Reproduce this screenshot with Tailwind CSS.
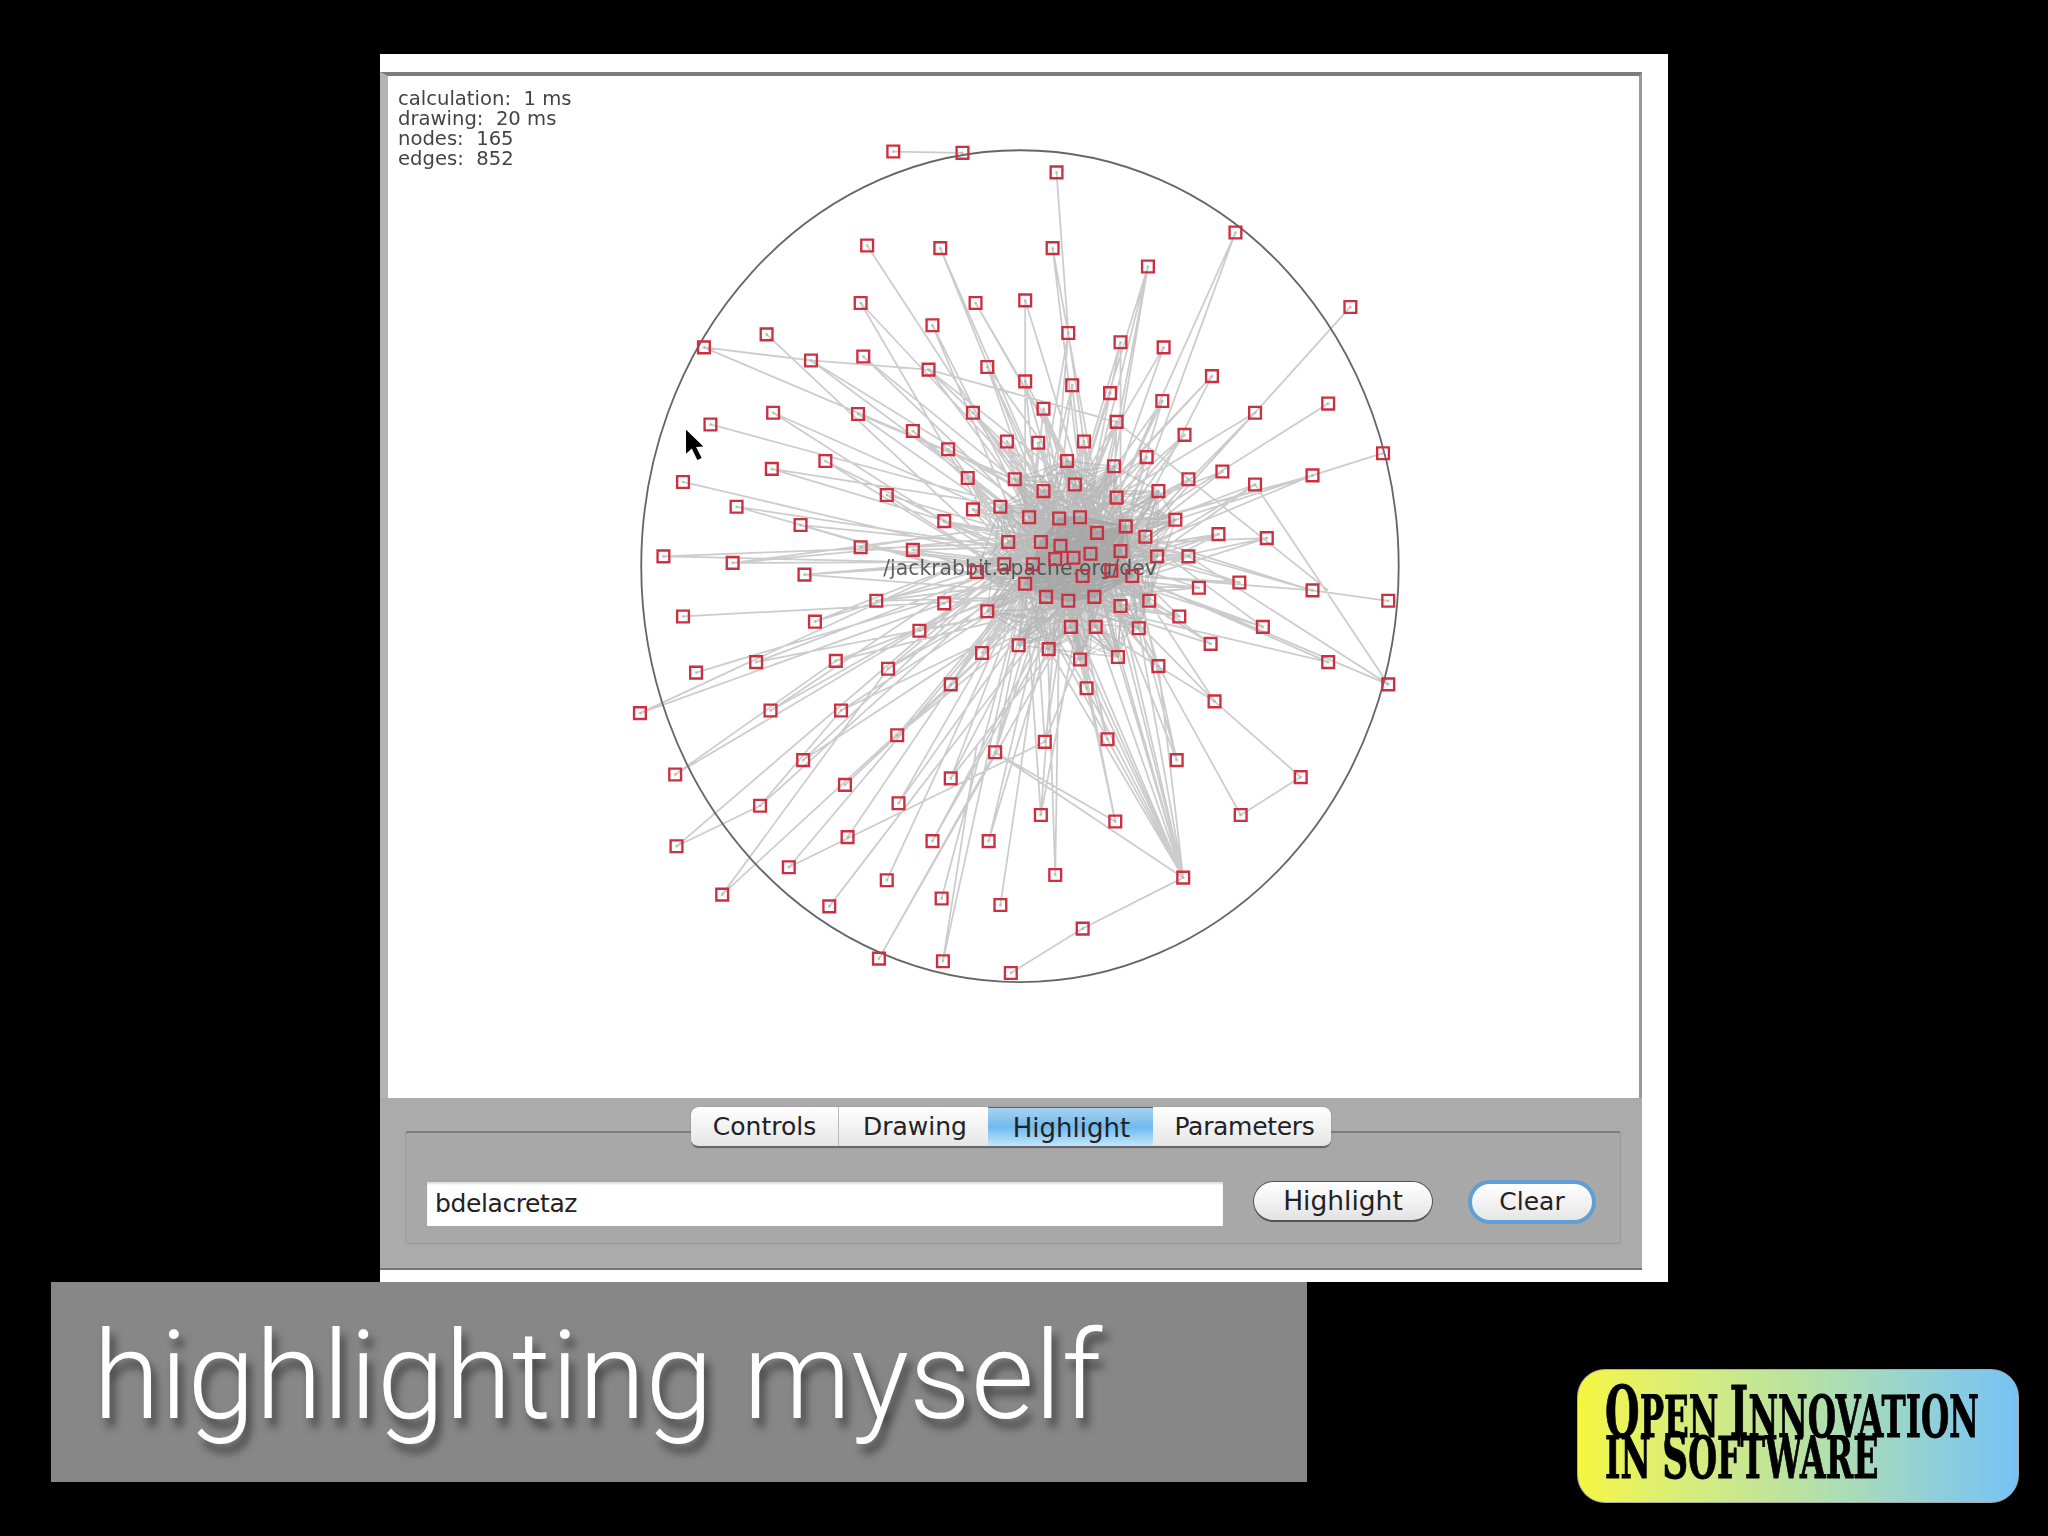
<!doctype html>
<html>
<head>
<meta charset="utf-8">
<script src="https://cdn.jsdelivr.net/npm/@tailwindcss/browser@4"></script>
</head>
<body class="m-0 bg-black">
<div class="w-[2048px] h-[1536px] bg-black overflow-hidden pt-[54px] flex flex-col">
  <!-- white slide frame holding the application window -->
  <div class="ml-[380px] w-[1288px] h-[1228px] bg-white pt-[18px] shrink-0">
    <div class="w-[1262px] h-[1198px] flex flex-col">
      <!-- canvas -->
      <div class="relative h-[1026px] border-t-[4px] border-t-[#7c7c7c] border-l-[8px] border-l-[#b4b4b4] border-r-[3px] border-r-[#989898] bg-white">
        <div class="absolute left-[10px] top-[13px] font-['DejaVu_Sans',sans-serif] text-[19.6px] leading-[20px] text-[#444] blur-[0.4px]">
          <div class="whitespace-pre">calculation:  1 ms</div>
          <div class="whitespace-pre">drawing:  20 ms</div>
          <div class="whitespace-pre">nodes:  165</div>
          <div class="whitespace-pre">edges:  852</div>
        </div>
        <svg id="g" class="block w-[1251px] h-[1022px] blur-[0.6px]" viewBox="297.1 58.2 957.9 782.5" fill="none">
          <g id="edges"></g>
          <ellipse cx="781" cy="433.5" rx="290" ry="318.5" stroke="#666" stroke-width="1.4"></ellipse>
          <path d="M525.3 329 V347.5 L529.7 343.4 L534 352.3 L537.3 350.6 L533 342.2 L538.6 341.8 Z" fill="#000"></path>
          <text x="781" y="440" text-anchor="middle" font-family="DejaVu Sans" font-size="15.6" fill="#444" fill-opacity=".85">/jackrabbit.apache.org/dev</text>
          <g id="nodes"></g>
        </svg>
      </div>
      <!-- bottom control panel -->
      <div class="h-[172px] bg-[#ababab] border-b-[2px] border-b-[#777] pt-[9px] px-[25px] flex flex-col font-['DejaVu_Sans',sans-serif] text-[#222]">
        <div class="relative z-10 mx-auto flex h-[41px] w-[640px] rounded-[8px] bg-gradient-to-b from-white to-[#e6e6e6] border-b-[2px] border-b-[#666] shadow-[0_0_1px_#555] text-[25px] leading-[40px] text-center overflow-hidden">
          <div class="w-[148px] border-r border-r-[#bbb]">Controls</div>
          <div class="w-[149px] pl-[3px]">Drawing</div>
          <div class="w-[165px] pl-[2px] text-[26px] bg-gradient-to-b from-[#a8d2f0] via-[#6fbaee] to-[#c2e6fb] border-t-[1px] border-t-[#5a5aa0]">Highlight</div>
          <div class="flex-1 pl-[5px] tracking-[-0.3px]">Parameters</div>
        </div>
        <div class="-mt-[17px] h-[113px] w-[1216px] rounded-[3px] border border-[#999] border-t-[2px] border-t-[#7d7d7d] bg-[#a8a8a8] pl-[21px] pt-[49px] flex items-start">
          <div class="shrink-0 w-[796px] h-[44px] bg-white shadow-[inset_0_2px_2px_#ddd] text-[25px] leading-[44px] pl-[8px] tracking-[-0.4px] text-[#222]">bdelacretaz</div>
          <div class="shrink-0 ml-[30px] w-[180px] h-[41px] -mt-[1px] rounded-full bg-gradient-to-b from-white via-[#f2f2f2] to-[#e2e2e2] border border-[#555] border-b-[2px] text-center text-[26.5px] leading-[38px]">Highlight</div>
          <div class="shrink-0 ml-[35px] w-[128px] h-[44px] -mt-[2px] rounded-full bg-gradient-to-b from-white to-[#e6e6e6] border-[4px] border-[#5f9fd6] text-center text-[25px] leading-[36px]">Clear</div>
        </div>
      </div>
    </div>
  </div>
  <!-- bottom strip: caption and logo -->
  <div class="flex items-start">
    <div class="ml-[51px] w-[1256px] h-[200px] bg-[#878787] pl-[42px] pt-[20px] text-white font-['Roboto',sans-serif] font-light text-[122px] leading-[150px] whitespace-nowrap [text-shadow:5px_9px_9px_rgba(0,0,0,0.5)]">highlighting myself</div>
    <div class="ml-[270px] mt-[87px] w-[442px] h-[134px] rounded-[28px] border border-[#aaa] bg-gradient-to-r from-[#f5f63c] via-[#b9e2a0] to-[#76c2f6] pl-[27px] pt-[20px] text-black font-['DejaVu_Serif',serif] font-bold leading-[44px] whitespace-nowrap [-webkit-text-stroke:1px_black]">
      <div class="h-[44px] origin-left scale-x-[0.56] w-[700px] text-[58px]"><span class="text-[71px]">O</span>PEN <span class="text-[71px]">I</span>NNOVATION</div>
      <div class="h-[44px] origin-left scale-x-[0.57] w-[700px] text-[58px]">IN <span class="text-[63px]">S</span>OFTWARE</div>
    </div>
  </div>
</div>
<script>
var N=[[684,116],[737,117],[809,132],[664,188],[720,190],[806,190],[946,178],[879,204],[1034,235],[659,232],[747,232],[785,230],[714,249],[818,255],[587,256],[539,266],[661,273],[621,276],[858,262],[891,266],[711,283],[756,281],[785,292],[821,295],[850,301],[928,288],[890,307],[961,316],[1017,309],[592,316],[544,325],[657,317],[745,316],[799,313],[855,323],[699,330],[907,333],[771,338],[795,339],[830,338],[726,344],[1059,347],[632,353],[591,359],[817,353],[853,357],[878,350],[741,366],[777,367],[823,371],[523,369],[910,367],[936,361],[1005,364],[961,371],[679,379],[799,376],[855,381],[887,376],[564,388],[745,390],[766,388],[788,396],[811,397],[827,396],[723,399],[900,398],[613,402],[862,403],[840,408],[933,409],[970,412],[877,411],[659,419],[699,421],[772,415],[797,415],[812,418],[508,426],[561,431],[858,422],[835,424],[822,427],[808,428],[886,426],[910,426],[616,440],[748,438],[769,432],[791,432],[829,441],[851,437],[867,441],[785,447],[918,450],[949,446],[1005,452],[1063,460],[523,472],[671,460],[723,462],[801,457],[818,460],[838,457],[858,464],[880,460],[756,468],[903,472],[624,476],[704,483],[820,480],[839,480],[872,481],[967,480],[927,493],[780,494],[803,497],[827,505],[856,503],[752,500],[579,507],[640,506],[680,512],[533,515],[887,510],[1017,507],[1063,524],[728,524],[832,527],[930,537],[590,544],[644,544],[490,546],[687,563],[800,568],[848,566],[762,576],[615,582],[901,582],[517,593],[728,596],[996,595],[647,601],[582,617],[688,615],[950,624],[797,624],[854,629],[649,641],[714,644],[757,644],[518,648],[604,664],[808,670],[906,672],[679,674],[721,688],[766,693],[635,694],[553,685],[829,711],[673,734],[722,736],[774,745]];
var s=12345;function R(){s=(s*1103515245+12345)&2147483647;return s/2147483647;}
var cx=825,cy=428,C=N.filter(function(p){return Math.hypot(p[0]-cx,p[1]-cy)<48;});
var M=N.filter(function(p){return Math.hypot(p[0]-cx,p[1]-cy)<85;});
function T(){return C[Math.floor(R()*C.length)];}
var hard="",dark="",mid="";
function L(a,b){return "M"+a[0]+" "+a[1]+"L"+b[0]+" "+b[1];}
var skip={"809,132":1,"774,745":1,"996,595":1,"950,624":1,"829,711":1,"1034,235":1,"1059,347":1,"1063,460":1};
N.forEach(function(p){
  var d=Math.hypot(p[0]-cx,p[1]-cy),k;
  if(p[1]<120||skip[p[0]+","+p[1]])return;
  if(d<62)k=6;else if(d<125)k=5;else if(d<200)k=3;else if(d<270)k=2;else k=1;
  for(var i=0;i<k;i++)hard+=L(p,T());
});
C.forEach(function(a){C.forEach(function(b){if(R()<0.95)dark+=L(a,b);});});
M.forEach(function(a){M.forEach(function(b){if(R()<0.3)mid+=L(a,b);});});
var ex=[[[684,116],[737,117]],[[809,132],[818,255]],[[774,745],[829,711]],[[829,711],[906,672]],[[950,624],[996,595]],[[950,624],[887,510]],[[996,595],[930,537]],[[762,576],[906,672]],[[854,629],[762,576]],[[906,672],[848,566]],[[906,672],[887,510]],[[906,672],[856,503]],[[906,672],[832,527]],[[906,672],[839,480]],[[906,672],[820,480]],[[906,672],[872,481]],[[906,672],[827,505]],[[906,672],[803,497]],[[906,672],[858,464]],[[906,672],[840,440]],[[1059,347],[1005,364]],[[1005,364],[870,420]],[[1034,235],[961,316]],[[961,316],[860,420]],[[946,178],[855,381]],[[879,204],[853,357]],[[879,204],[830,400]],[[539,266],[621,276]],[[621,276],[711,283]],[[711,283],[855,323]],[[855,323],[1017,452]],[[1063,460],[1005,452]],[[1063,524],[910,426]],[[1063,524],[961,371]],[[490,546],[723,462]],[[518,648],[582,617]],[[582,617],[644,544]],[[553,685],[680,512]],[[517,593],[640,506]],[[604,664],[800,568]],[[673,734],[762,576]],[[722,736],[748,570]],[[508,426],[770,432]],[[561,431],[780,430]],[[616,440],[790,425]]];
ex.forEach(function(e){hard+=L(e[0],e[1]);});
var E=document.getElementById("edges");
function P(d,c,w,o){var x=document.createElementNS("http://www.w3.org/2000/svg","path");x.setAttribute("d",d);x.setAttribute("stroke",c);x.setAttribute("stroke-width",w);x.setAttribute("stroke-opacity",o);E.appendChild(x);}
P(hard,"#aaaaaa",1.35,0.6);
P(mid,"#aaaaaa",1.1,0.55);
P(dark,"#a4a4a4",1.6,0.85);
var G=document.getElementById("nodes"),sq="",dot="";
N.forEach(function(p){
  sq+="M"+(p[0]-4.5)+" "+(p[1]-4.5)+"h9v9h-9z";
  dot+="M"+(p[0]-1)+" "+(p[1]-1)+"h2v2h-2z";
});
function Q(d,attrs){var x=document.createElementNS("http://www.w3.org/2000/svg","path");x.setAttribute("d",d);for(var k in attrs)x.setAttribute(k,attrs[k]);G.appendChild(x);}
Q(dot,{fill:"#999","fill-opacity":.5});
Q(sq,{stroke:"#cc3040","stroke-width":1.8});
</script>
</body>
</html>
